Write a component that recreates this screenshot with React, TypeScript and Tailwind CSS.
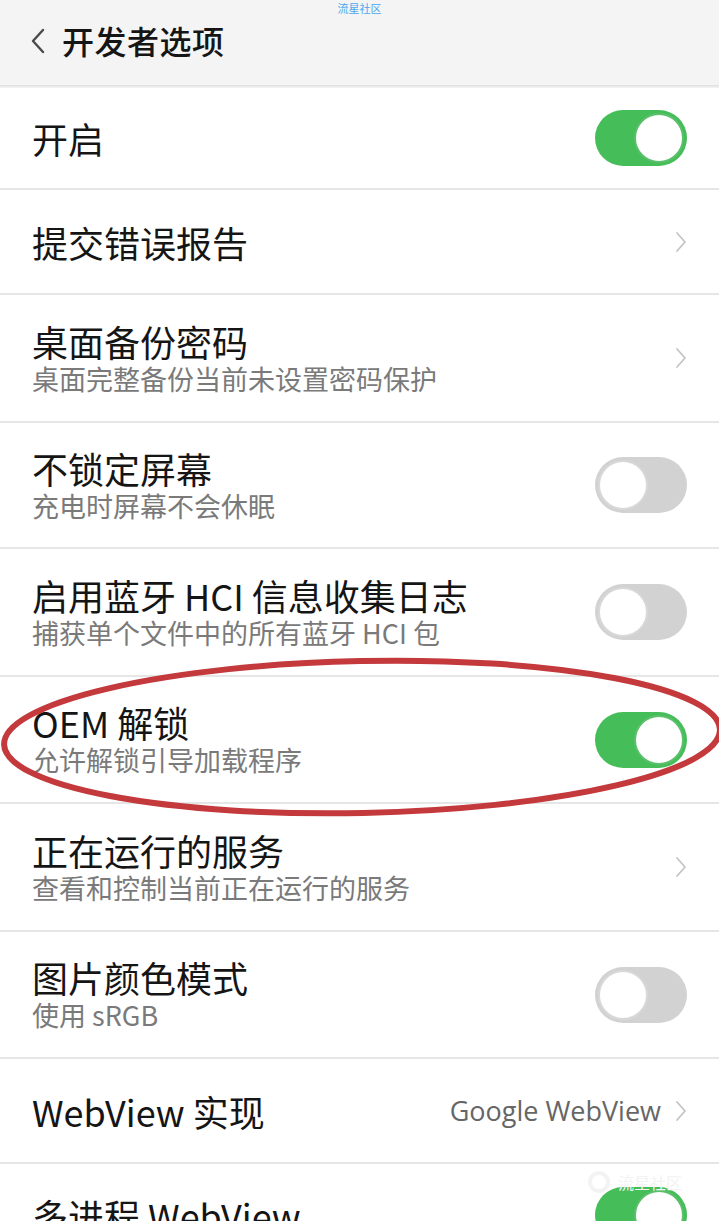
import React from 'react';

type Row = {
  title: string;
  sub?: string;
  kind: 'on' | 'off' | 'chevron';
  value?: string;
  h: string;
};

const rows: Row[] = [
  { title: '开启', kind: 'on', h: 'h-[102px]' },
  { title: '提交错误报告', kind: 'chevron', h: 'h-[105px]' },
  { title: '桌面备份密码', sub: '桌面完整备份当前未设置密码保护', kind: 'chevron', h: 'h-[128px]' },
  { title: '不锁定屏幕', sub: '充电时屏幕不会休眠', kind: 'off', h: 'h-[126px]' },
  { title: '启用蓝牙 HCI 信息收集日志', sub: '捕获单个文件中的所有蓝牙 HCI 包', kind: 'off', h: 'h-[128px]' },
  { title: 'OEM 解锁', sub: '允许解锁引导加载程序', kind: 'on', h: 'h-[127px]' },
  { title: '正在运行的服务', sub: '查看和控制当前正在运行的服务', kind: 'chevron', h: 'h-[128px]' },
  { title: '图片颜色模式', sub: '使用 sRGB', kind: 'off', h: 'h-[127px]' },
  { title: 'WebView 实现', kind: 'chevron', value: 'Google WebView', h: 'h-[105px]' },
  { title: '多进程 WebView', kind: 'on', h: 'h-[104px]' },
];

function Toggle({ on }: { on: boolean }) {
  return on ? (
    <div className="flex h-[56px] w-[92px] items-center justify-end rounded-full bg-[#45bd58] pr-[3px]">
      <div className="h-[50px] w-[50px] rounded-full border-[2px] border-[#5cbf6c] bg-white" />
    </div>
  ) : (
    <div className="flex h-[56px] w-[92px] items-center justify-start rounded-full bg-[#d2d2d2] pl-[3px]">
      <div className="h-[50px] w-[50px] rounded-full border-[2px] border-[#d8d8d8] bg-white" />
    </div>
  );
}

function Chevron() {
  return (
    <svg width="12" height="22" viewBox="0 0 12 22" fill="none">
      <path d="M2 2 L10 11 L2 20" stroke="#c4c4c4" strokeWidth="1.8" strokeLinecap="round" strokeLinejoin="round" />
    </svg>
  );
}

export default function App(): JSX.Element {
  return (
    <div
      className="relative h-[1221px] w-[719px] overflow-hidden bg-white text-[#161616]"
      style={{ fontFamily: '"Noto Sans CJK SC", "Noto Sans", sans-serif' }}
    >
      <header className="relative flex h-[85px] items-center bg-[#f4f4f4] pl-[30px]">
        <div className="absolute left-0 right-0 top-0 text-center text-[11px] leading-[16px] text-[#4ea6ec]">流星社区</div>
        <svg width="16" height="28" viewBox="0 0 16 28" fill="none" className="mt-[-4px]">
          <path d="M13 3 L3 14 L13 25" stroke="#4a4a4a" strokeWidth="2.4" strokeLinecap="round" strokeLinejoin="round" />
        </svg>
        <h1 className="ml-[16px] mt-[-6px] text-[32px] font-medium leading-[40px] tracking-[0.5px] text-[#151515]">开发者选项</h1>
      </header>
      <div className="h-[3px] bg-gradient-to-b from-[#dedede] to-[#f6f6f6]" />

      {rows.map((r) => (
        <div key={r.title} className={`flex ${r.h} items-center justify-between border-b-2 border-[#e6e6e6] pl-[32px] pr-[32px]`}>
          <div className="flex flex-col">
            <div className="text-[36px] leading-[40px] text-[#151515]">{r.title}</div>
            {r.sub && <div className="mt-[1px] text-[27px] leading-[34px] text-[#7a7a7a]">{r.sub}</div>}
          </div>
          <div className="flex items-center gap-[14px]">
            {r.value && <span className="text-[27px] leading-[32px] text-[#666]" style={{ fontFamily: '"Open Sans", "Noto Sans", sans-serif' }}>{r.value}</span>}
            {r.kind === 'chevron' ? <Chevron /> : <Toggle on={r.kind === 'on'} />}
          </div>
        </div>
      ))}

      {/* faint bottom watermark */}
      <div className="absolute left-[588px] top-[1170px] flex items-center gap-[8px] text-[16px] text-[#f3f3f3]">
        <div className="h-[22px] w-[22px] rounded-full border-[4px] border-[#f3f3f3]" />
        <span>流星社区</span>
      </div>

      {/* red annotation ellipse */}
      <svg className="pointer-events-none absolute left-0 top-[650px]" width="719" height="175" viewBox="0 0 719 175">
        <ellipse cx="362" cy="87" rx="358" ry="76" fill="none" stroke="#c3393c" strokeWidth="6" transform="rotate(-1.2 362 87)" />
      </svg>
    </div>
  );
}
